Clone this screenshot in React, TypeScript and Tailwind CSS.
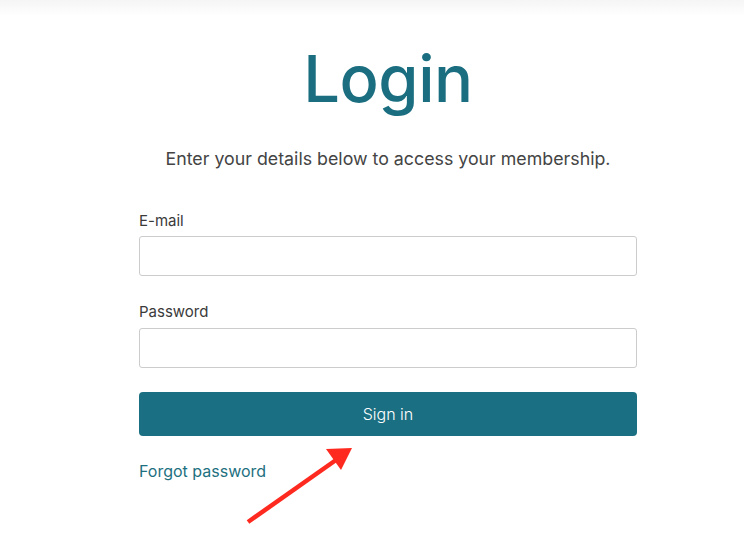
export default function App() {
  return (
    <div className="relative min-h-[558px] bg-white font-['Inter',sans-serif] overflow-hidden">
      <div className="h-[16px] bg-gradient-to-b from-[#f5f5f5] to-white" />
      <div className="ml-[139px] w-[498px] flex flex-col">
        <h1 className="text-center text-[65px] leading-none font-medium text-[#1a6e80] mt-[30px] tracking-[-0.5px]">
          Login
        </h1>
        <p className="text-center text-[17.8px] text-[#444] mt-[35px]">
          Enter your details below to access your membership.
        </p>
        <label className="text-[15px] text-[#3a3a3a] mt-[37px]">E-mail</label>
        <input
          type="email"
          className="mt-[4px] h-[40px] w-full border border-[#cccccc] rounded-[3px] px-3 outline-none"
        />
        <label className="text-[15px] text-[#3a3a3a] mt-[25px]">Password</label>
        <input
          type="password"
          className="mt-[4px] h-[40px] w-full border border-[#cccccc] rounded-[3px] px-3 outline-none"
        />
        <button className="mt-[24px] h-[44px] w-full bg-[#1b6f82] text-white text-[16px] font-light rounded-[4px]">
          Sign in
        </button>
        <a className="mt-[23px] text-[16px] text-[#1d7080] self-start" href="#">
          Forgot password
        </a>
      </div>
      <svg className="absolute left-0 top-0" width="744" height="558" viewBox="0 0 744 558">
        <line x1="248" y1="522" x2="336" y2="460" stroke="#ff2a1f" strokeWidth="4.5" />
        <polygon points="352,448 341,470 326,449" fill="#ff2a1f" />
      </svg>
    </div>
  );
}
